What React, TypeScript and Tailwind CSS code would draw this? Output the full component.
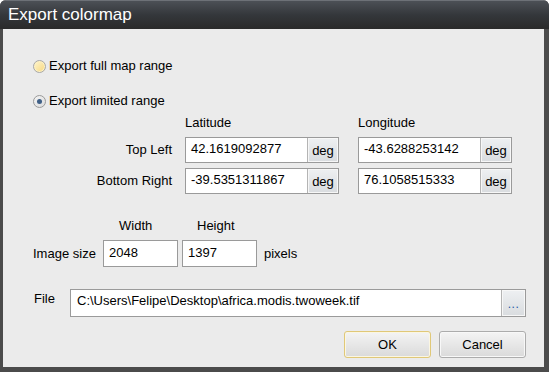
import { useState } from "react";

type CoordProps = {
  value: string;
};

function DegInput({ value }: CoordProps) {
  return (
    <div className="flex h-[26px] w-[154px] border border-[#9a9a9a] bg-white">
      <div className="flex-1 pl-[5px] pt-[3px] leading-[16px]">{value}</div>
      <div className="flex w-[31px] items-center justify-center border-l border-[#b4b4b4] bg-gradient-to-b from-[#eef0f2] to-[#d9dcdf] pt-[2px] shadow-[inset_0_0_0_1px_#f7f7f7]">
        deg
      </div>
    </div>
  );
}

function Radio({ checked, hover, label }: { checked: boolean; hover?: boolean; label: string }) {
  return (
    <div className="flex h-[14px] items-center">
      <div
        className={
          hover
            ? "flex h-[13px] w-[13px] items-center justify-center rounded-full border border-[#a8a8a8] bg-gradient-to-br from-[#fff6d0] to-[#f7d77a] shadow-[inset_0_0_0_1px_#fdf1c4]"
            : "flex h-[13px] w-[13px] items-center justify-center rounded-full border border-[#9a9a9a] bg-gradient-to-br from-[#f4f4f4] to-[#dcdcdc]"
        }
      >
        {checked && <div className="h-[5px] w-[5px] rounded-full bg-[#3f5f86]" />}
      </div>
      <span className="ml-[3px]">{label}</span>
    </div>
  );
}

export default function App() {
  const [range] = useState<"full" | "limited">("limited");

  return (
    <div
      className="flex h-[372px] w-[549px] flex-col overflow-hidden rounded-t-[6px] bg-[#4b4b4b] text-[13px] text-black"
      style={{ fontFamily: '"Liberation Sans", Arial, sans-serif' }}
    >
      {/* Title bar */}
      <div className="flex h-[29px] items-center border-t border-[#6d7177] bg-gradient-to-b from-[#4c5056] via-[#34373b] to-[#2a2a2a] pl-[8px] pb-[2px]">
        <span className="text-[17px] leading-none text-white">Export colormap</span>
      </div>

      {/* Body */}
      <div className="mb-[5px] ml-[3px] mr-[5px] flex flex-1 flex-col bg-[#ebebeb] pl-[30px] pr-[18px]">
        <div className="mt-[30px]">
          <Radio checked={range === "full"} hover label="Export full map range" />
        </div>
        <div className="mt-[21px]">
          <Radio checked={range === "limited"} label="Export limited range" />
        </div>

        {/* Coordinates */}
        <div className="mt-[7px] grid grid-cols-[139px_154px_154px] gap-x-[13px]">
          <div />
          <div className="h-[16px] leading-[16px]">Latitude</div>
          <div className="ml-[6px] h-[16px] leading-[16px]">Longitude</div>
        </div>
        <div className="mt-[6px] flex items-center">
          <div className="w-[139px] text-right">Top Left</div>
          <div className="ml-[13px]">
            <DegInput value="42.1619092877" />
          </div>
          <div className="ml-[19px]">
            <DegInput value="-43.6288253142" />
          </div>
        </div>
        <div className="mt-[5px] flex items-center">
          <div className="w-[139px] text-right">Bottom Right</div>
          <div className="ml-[13px]">
            <DegInput value="-39.5351311867" />
          </div>
          <div className="ml-[19px]">
            <DegInput value="76.1058515333" />
          </div>
        </div>

        {/* Image size */}
        <div className="mt-[24px] flex h-[16px] leading-[16px]">
          <div className="w-[70px]" />
          <div className="w-[79px] pl-[16px]">Width</div>
          <div className="pl-[15px]">Height</div>
        </div>
        <div className="mt-[6px] flex items-center">
          <div className="w-[70px]">Image size</div>
          <div className="h-[27px] w-[75px] border border-[#9a9a9a] bg-white pl-[5px] pt-[4px] leading-[16px]">2048</div>
          <div className="ml-[4px] h-[27px] w-[75px] border border-[#9a9a9a] bg-white pl-[5px] pt-[4px] leading-[16px]">1397</div>
          <div className="ml-[7px]">pixels</div>
        </div>

        {/* File */}
        <div className="mt-[22px] flex items-center">
          <div className="w-[37px] pl-[1px] pb-[8px]">File</div>
          <div className="flex h-[28px] flex-1 border border-[#9a9a9a] bg-white">
            <div className="flex-1 pl-[6px] pt-[3px] leading-[16px]">C:\Users\Felipe\Desktop\africa.modis.twoweek.tif</div>
            <div className="flex w-[24px] items-center justify-center border-l border-[#b4b4b4] bg-gradient-to-b from-[#eef0f2] to-[#d9dcdf] pt-[2px] text-[12px] tracking-[0.5px] text-[#2456a6] shadow-[inset_0_0_0_1px_#f7f7f7]">
              ...
            </div>
          </div>
        </div>

        {/* Buttons */}
        <div className="mt-[14px] flex justify-end gap-[8px]">
          <button className="h-[27px] w-[87px] rounded-[3px] border border-[#e0c878] bg-gradient-to-b from-[#f4f4f4] to-[#dadada] shadow-[inset_0_0_0_1px_#fbf6e2]">
            OK
          </button>
          <button className="h-[27px] w-[87px] rounded-[3px] border border-[#acacac] bg-gradient-to-b from-[#f4f4f4] to-[#dadada] shadow-[inset_0_0_0_1px_#f8f8f8]">
            Cancel
          </button>
        </div>
      </div>
    </div>
  );
}
